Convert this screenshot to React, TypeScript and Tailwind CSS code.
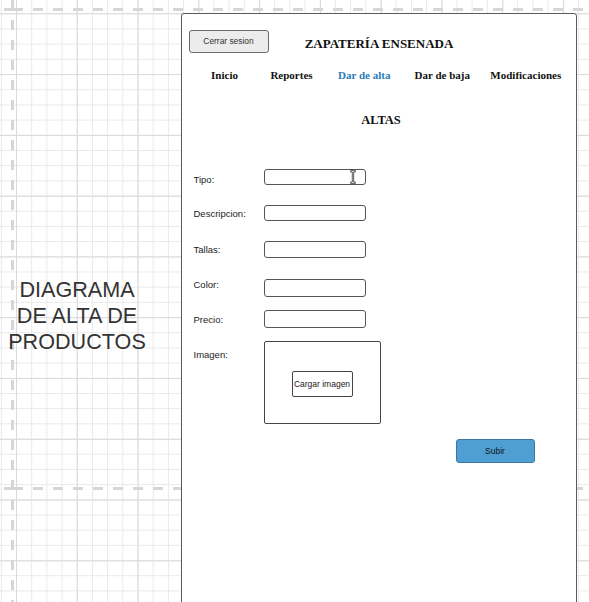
import React from "react"

const sans = "font-['Liberation_Sans',Arial,sans-serif]"
const serif = "font-['Liberation_Serif','Times_New_Roman',serif]"

const navItems = [
  { label: "Inicio", w: "w-[64px]", active: false },
  { label: "Reportes", w: "w-[70px]", active: false },
  { label: "Dar de alta", w: "w-[75.5px]", active: true },
  { label: "Dar de baja", w: "w-[80.5px]", active: false },
  { label: "Modificaciones", w: "w-[86.6px]", active: false },
]

const SpinIcon = () => (
  <svg width="6" height="14" viewBox="0 0 6 14" className="block">
    <path
      d="M0.6 0.6 H5.4 V2 H3.7 V12 H5.4 V13.4 H0.6 V12 H2.3 V2 H0.6 Z"
      fill="#fff"
      stroke="#333"
      strokeWidth="0.8"
      strokeLinejoin="round"
    />
  </svg>
)

const App = () => {
  return (
    <div className="relative w-[589px] h-[602px] overflow-hidden bg-white bg-[image:linear-gradient(to_right,#dadada_1px,transparent_1px),linear-gradient(to_bottom,#dadada_1px,transparent_1px),linear-gradient(to_right,#e9e9e9_1px,transparent_1px),linear-gradient(to_bottom,#e9e9e9_1px,transparent_1px)] bg-[size:60.8px_60.8px,60.8px_60.8px,15.2px_15.2px,15.2px_15.2px] bg-[position:16px_13.3px]">
      {/* page break lines of the canvas */}
      <div className="absolute left-0 top-[7.5px] w-full h-[3px] bg-[image:repeating-linear-gradient(to_right,#d6d6d6_0_10px,transparent_10px_20px)] bg-[position:13px_0]" />
      <div className="absolute left-0 top-[487px] w-full h-[3px] bg-[image:repeating-linear-gradient(to_right,#d6d6d6_0_10px,transparent_10px_20px)] bg-[position:13px_0]" />
      <div className="absolute left-[11px] top-0 w-[3px] h-full bg-[image:repeating-linear-gradient(to_bottom,#d6d6d6_0_10px,transparent_10px_20px)]" />

      <div className="relative flex">
        <div className={`w-[154px] pt-[277px] text-center text-[21.6px] leading-[26px] text-[#333] ${sans}`}>
          DIAGRAMA
          <br />
          DE ALTA DE
          <br />
          PRODUCTOS
        </div>

        <div className="ml-[27px] mt-[13px] w-[396px] h-[600px] bg-white border-[1.5px] border-[#5a5a5a] rounded-[3px]">
          {/* header */}
          <div className="grid grid-cols-[1fr_auto_1fr] items-start mt-[15.5px] h-[23px]">
            <div>
              <button className={`block ml-[6.5px] w-[80px] h-[23px] bg-[#ececec] border border-[#6a6a6a] rounded-[3px] text-[8.4px] text-[#333] ${sans}`}>
                Cerrar sesion
              </button>
            </div>
            <div className={`mt-[6px] text-[13px] leading-[15px] font-bold text-[#111] ${serif}`}>
              ZAPATERÍA ENSENADA
            </div>
            <div />
          </div>

          {/* nav */}
          <div className={`flex ml-[10.5px] mt-[16.8px] text-[11px] leading-[13px] font-bold ${serif}`}>
            {navItems.map((item) => (
              <div
                key={item.label}
                className={`${item.w} text-center whitespace-nowrap ${item.active ? "text-[#2a7bb9]" : "text-[#111]"}`}
              >
                {item.label}
              </div>
            ))}
          </div>

          <div className={`mt-[30.8px] pl-[4px] text-center text-[12.5px] leading-[15px] font-bold text-[#111] ${serif}`}>
            ALTAS
          </div>

          {/* form */}
          <div className={`ml-[11.5px] text-[9.5px] leading-[12px] text-[#222] ${sans}`}>
            <div className="flex items-center mt-[41.4px] h-[16px]">
              <span className="w-[70px] mt-[6px]">Tipo:</span>
              <div className="w-[102px] h-full border border-[#555] rounded-[3px] flex items-center justify-end pr-[9px]">
                <SpinIcon />
              </div>
            </div>
            <div className="flex items-center mt-[20px] h-[16px]">
              <span className="w-[70px] mt-[2px]">Descripcion:</span>
              <div className="w-[102px] h-full border border-[#555] rounded-[3px]" />
            </div>
            <div className="flex items-center mt-[20px] h-[17px]">
              <span className="w-[70px]">Tallas:</span>
              <div className="w-[102px] h-full border border-[#555] rounded-[3px]" />
            </div>
            <div className="flex items-center mt-[21px] h-[18px]">
              <span className="w-[70px] mb-[6px]">Color:</span>
              <div className="w-[102px] h-full border border-[#555] rounded-[3px]" />
            </div>
            <div className="flex items-center mt-[13px] h-[18px]">
              <span className="w-[70px] mt-[2px]">Precio:</span>
              <div className="w-[102px] h-full border border-[#555] rounded-[3px]" />
            </div>
            <div className="flex items-start mt-[13px]">
              <span className="w-[70px] mt-[8px]">Imagen:</span>
              <div className="w-[117px] h-[83px] border border-[#444] rounded-[2px] flex items-center justify-center">
                <button className="mt-[3px] w-[61px] h-[26px] bg-white border border-[#444] rounded-[2px] text-[8.5px] text-[#222] whitespace-nowrap">
                  Cargar imagen
                </button>
              </div>
            </div>
          </div>

          <button className={`block ml-[273.5px] mt-[15px] w-[79px] h-[24px] bg-[#4f9fd2] border border-[#3a77a6] rounded-[3px] text-[8.5px] text-[#111] ${sans}`}>
            Subir
          </button>
        </div>
      </div>
    </div>
  )
}

export default App
